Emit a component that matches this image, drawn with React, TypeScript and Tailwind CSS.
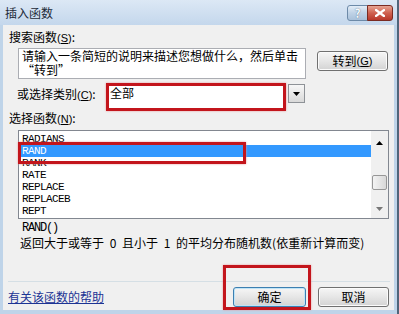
const items = ["RADIANS", "RAND", "RANK", "RATE", "REPLACE", "REPLACEB", "REPT"];

const cjk = "font-['SimSun','Noto_Sans_CJK_SC',sans-serif]";

function Key({ k }: { k: string }) {
  return (
    <span className="font-['Liberation_Sans',sans-serif] text-[11px]">
      (<span className="underline underline-offset-1">{k}</span>)
    </span>
  );
}

function Btn({ children, def }: { children: React.ReactNode; def?: boolean }) {
  return (
    <div
      className={`flex h-[20px] items-center justify-center rounded-[3px] border bg-gradient-to-b from-[#f6f6f6] via-[#e6e6e6] to-[#d3d3d3] text-[12px] leading-none text-black ${
        def ? "border-[#3c7fb1] shadow-[inset_0_0_0_1px_#bfe4f7]" : "border-[#707070] shadow-[inset_0_0_0_1px_#fbfbfb]"
      }`}
    >
      {children}
    </div>
  );
}

function Arrow({ up, color = "#000" }: { up?: boolean; color?: string }) {
  return (
    <svg width="7" height="4" viewBox="0 0 7 4">
      <path d={up ? "M0 4 L3.5 0 L7 4 Z" : "M0 0 L7 0 L3.5 4 Z"} fill={color} />
    </svg>
  );
}

export default function App() {
  return (
    <div className={`flex h-[314px] w-[399px] flex-col border-r-2 border-r-[#50657a] bg-[#bfd4e9] ${cjk} text-[12px] text-black`}>
      {/* title bar */}
      <div className="flex h-[25px] shrink-0 items-start bg-gradient-to-b from-[#dce8f5] to-[#c4d7ec] pl-[5px] pr-[4px]">
        <span className="mt-[6px] flex-1 text-[12px] leading-[14px] text-[#1d2a38]">插入函数</span>
        <div className="mt-[5px] flex">
          <div className="flex h-[16px] w-[21px] items-center justify-center rounded-l-[3px] border border-[#6d8aa8] bg-gradient-to-b from-[#e3edf7] via-[#bfd2e6] to-[#a9c1da] text-[12px] font-bold leading-none text-[#f4f8fc] [text-shadow:0_0_1px_#3b5570]">
            ?
          </div>
          <div className="-ml-px flex h-[16px] w-[26px] items-center justify-center rounded-r-[3px] border border-[#7a2b22] bg-gradient-to-b from-[#e6a493] via-[#cf6150] to-[#b8372a]">
            <svg width="10" height="8" viewBox="0 0 10 8">
              <path d="M1 1 L9 7 M9 1 L1 7" stroke="#fff" strokeWidth="2.2" strokeLinecap="square" />
            </svg>
          </div>
        </div>
      </div>

      {/* body */}
      <div className="mx-[3px] flex h-[285px] flex-col bg-[#f0f0f0]">
        <div className="ml-[6px] mt-[5px] leading-[14px]">
          搜索函数<Key k="S" />:
        </div>

        <div className="mt-[3px] flex items-start">
          <div className="ml-[15px] h-[31px] w-[288px] border border-[#abadb3] bg-white pl-[3px] leading-[14px]">
            <div>请输入一条简短的说明来描述您想做什么，然后单击</div>
            <div>“转到”</div>
          </div>
          <div className="ml-[11px] mt-[3px] w-[71px]">
            <Btn>
              转到<Key k="G" />
            </Btn>
          </div>
        </div>

        <div className="mt-[4px] flex items-start">
          <div className="ml-[14px] mt-[4px] w-[89px] leading-[14px]">
            或选择类别<Key k="C" />:
          </div>
          <div className="h-[28px] w-[180px] border-[3px] border-[#c3151c] bg-white pl-[1px] leading-[14px] shadow-[0_0_2px_#e89a9c]">
            全部
          </div>
          <div className="ml-[2px] mt-[1px] flex h-[19px] w-[17px] items-center justify-center border border-[#8e9297] bg-gradient-to-b from-[#f7f7f7] to-[#d9d9d9]">
            <Arrow />
          </div>
        </div>

        <div className="ml-[6px] leading-[14px]">
          选择函数<Key k="N" />:
        </div>

        <div className="relative ml-[15px] mt-[4px] flex h-[89px] w-[371px] border border-[#828790] bg-white">
          <div className="flex-1 pt-[2px]">
            {items.map((it) => (
              <div
                key={it}
                className={`h-[12px] pl-[3px] font-['Liberation_Mono',monospace] text-[11px] leading-[12px] tracking-[-0.6px] ${
                  it === "RAND" ? "bg-[#3399ff] text-white" : "text-black"
                }`}
              >
                {it}
              </div>
            ))}
          </div>
          <div className="flex w-[17px] flex-col items-center bg-[#f0f0f0]">
            <div className="flex h-[17px] w-full items-center justify-center pt-[6px]">
              <Arrow up />
            </div>
            <div className="mt-[27px] h-[15px] w-[15px] rounded-[2px] border border-[#979797] bg-gradient-to-r from-[#f3f3f3] to-[#d8d8d8]" />
            <div className="mt-auto flex h-[17px] w-full items-center justify-center pb-[2px]">
              <Arrow color="#777" />
            </div>
          </div>
          <div className="absolute -left-px top-[11px] h-[22px] w-[228px] border-[3px] border-[#c3151c] shadow-[0_0_2px_#e89a9c]" />
        </div>

        <div className="ml-[19px] mt-[2px] font-['Liberation_Mono',monospace] text-[12px] leading-[14px] tracking-[-1.2px]">
          RAND()
        </div>
        <div className="ml-[17px] mt-[1px] leading-[14px] [word-spacing:3px]">
          返回大于或等于 0 且小于 1 的平均分布随机数(依重新计算而变)
        </div>

        <div className="ml-[5px] mr-[4px] mt-[31px] h-px bg-[#d5dfe5]" />

        <div className="mt-[5px] flex items-start">
          <a className="ml-[5px] mt-[3px] leading-[14px] text-[#1c3494] underline underline-offset-1">
            有关该函数的帮助
          </a>
          <div className="relative ml-auto w-[73px]">
            <Btn def>确定</Btn>
            <div className="absolute -left-[10px] -top-[22px] h-[45px] w-[88px] border-[3px] border-[#c3151c] shadow-[0_0_2px_#e89a9c]" />
          </div>
          <div className="ml-[12px] mr-[5px] w-[71px]">
            <Btn>取消</Btn>
          </div>
        </div>
      </div>
    </div>
  );
}
